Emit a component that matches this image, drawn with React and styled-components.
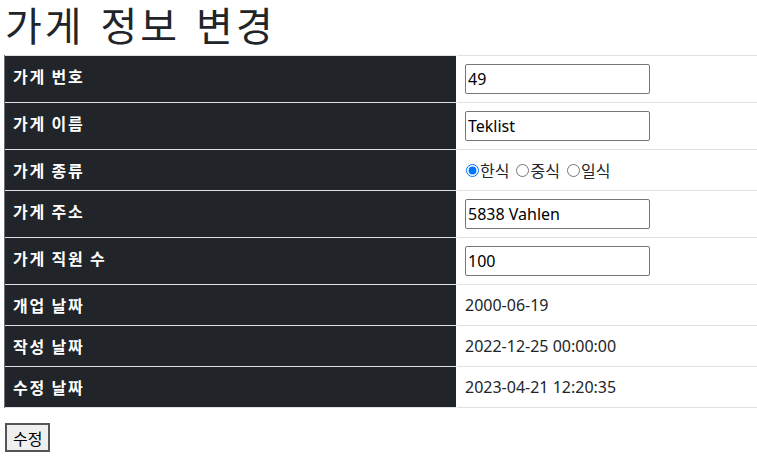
import React from "react";
import styled, { createGlobalStyle } from "styled-components";

const GlobalStyle = createGlobalStyle`
  *, *::before, *::after { box-sizing: border-box; }
  body {
    margin: 0;
    font-family: "Noto Sans", "Noto Sans CJK KR", sans-serif;
    font-size: 16px;
    line-height: 24px;
    color: #212529;
    background: #fff;
  }
`;

const Page = styled.div`
  padding-left: 4px;
`;

const Title = styled.h1`
  margin: 0 0 6px 1px;
  font-family: "Noto Sans CJK KR", sans-serif;
  font-size: 40px;
  font-weight: 400;
  line-height: 49px;
  letter-spacing: 3px;
  word-spacing: 4px;
  color: #212529;
  white-space: nowrap;
`;

const Table = styled.table`
  width: 100%;
  border-collapse: collapse;
  margin-bottom: 15px;
  border-top: 1px solid #dee2e6;
`;

const Row = styled.tr`
  border-bottom: 1px solid #dee2e6;
`;

const Head = styled.th`
  width: 452px;
  padding: 8px;
  text-align: left;
  vertical-align: top;
  background: #212529;
  color: #fff;
  font-family: "Noto Sans CJK KR", sans-serif;
  font-weight: 700;
  font-size: 16px;
  letter-spacing: 1.8px;
  line-height: 24px;
  border-left: 1px solid #6c6f73;
  border-right: 1px solid #fff;
`;

const Cell = styled.td`
  padding: 8px;
  vertical-align: top;
  font-size: 16px;
  line-height: 24px;
`;

const TextInput = styled.input`
  display: block;
  width: 185px;
  height: 30px;
  padding: 1px 2px;
  border: 1px solid #767676;
  border-radius: 2px;
  font-family: "Noto Sans", "Noto Sans CJK KR", sans-serif;
  font-size: 16px;
  color: #000;
`;

const RadioGroup = styled.div`
  display: flex;
  align-items: center;
  height: 24px;
  font-family: "Noto Sans CJK KR", sans-serif;
  font-size: 16px;
`;

const RadioLabel = styled.label`
  display: inline-flex;
  align-items: center;
  margin-right: 6px;
`;

const Radio = styled.input`
  width: 13px;
  height: 13px;
  margin: 0 1px 0 1px;
`;

const SubmitButton = styled.button`
  margin-left: 1px;
  padding: 1px 6px;
  height: 29px;
  border: 2px solid #555;
  background: #efefef;
  font-family: "Noto Sans CJK KR", sans-serif;
  font-size: 16px;
  color: #000;
`;

const rows = [
  { label: "가게 번호", input: "49" },
  { label: "가게 이름", input: "Teklist" },
  { label: "가게 종류", radio: true },
  { label: "가게 주소", input: "5838 Vahlen" },
  { label: "가게 직원 수", input: "100" },
  { label: "개업 날짜", text: "2000-06-19" },
  { label: "작성 날짜", text: "2022-12-25 00:00:00" },
  { label: "수정 날짜", text: "2023-04-21 12:20:35" },
];

const kinds = ["한식", "중식", "일식"];

export default function App() {
  return (
    <Page>
      <GlobalStyle />
      <Title>가게 정보 변경</Title>
      <Table>
        <tbody>
          {rows.map((r) => (
            <Row key={r.label}>
              <Head>{r.label}</Head>
              <Cell>
                {r.input && <TextInput defaultValue={r.input} />}
                {r.radio && (
                  <RadioGroup>
                    {kinds.map((k, i) => (
                      <RadioLabel key={k}>
                        <Radio type="radio" name="kind" defaultChecked={i === 0} />
                        {k}
                      </RadioLabel>
                    ))}
                  </RadioGroup>
                )}
                {r.text}
              </Cell>
            </Row>
          ))}
        </tbody>
      </Table>
      <SubmitButton>수정</SubmitButton>
    </Page>
  );
}
